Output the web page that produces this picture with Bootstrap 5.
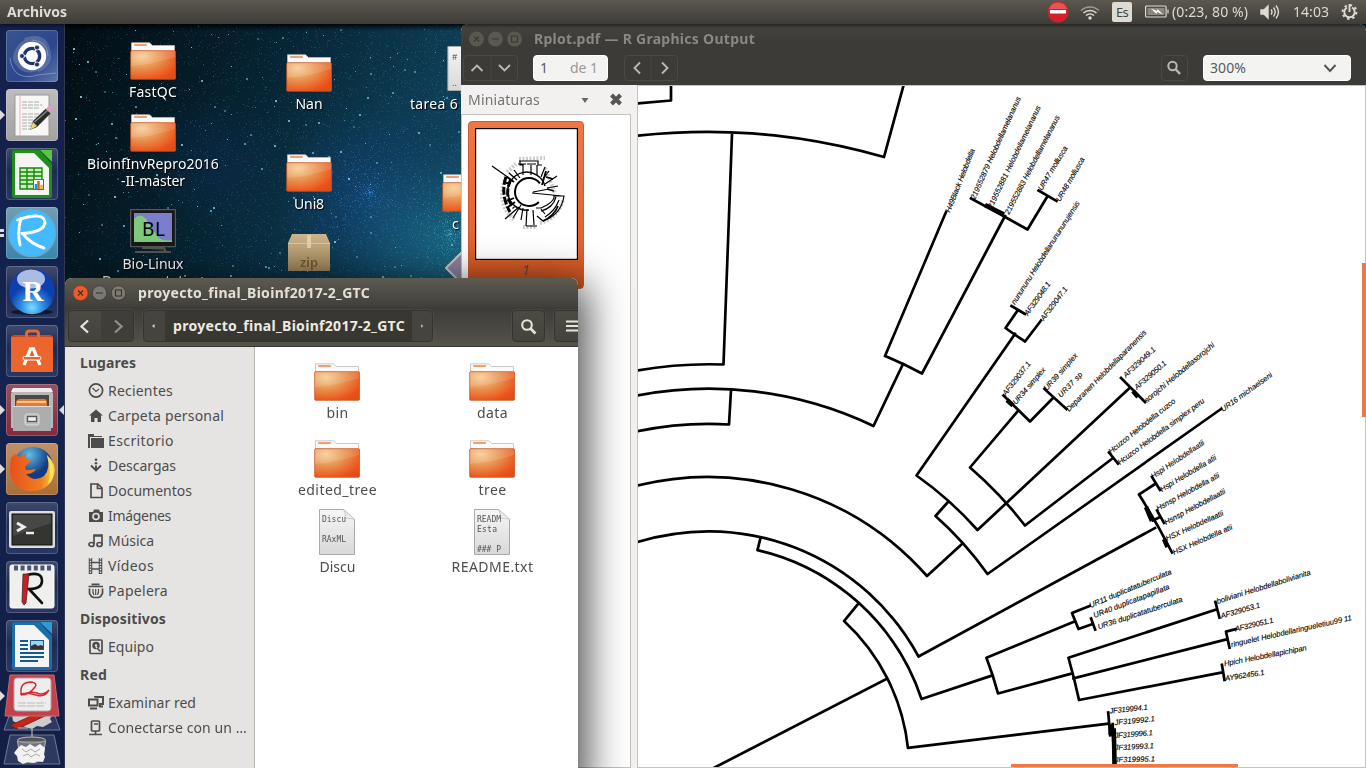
<!DOCTYPE html>
<html lang="es">
<head>
<meta charset="utf-8">
<title>Escritorio</title>
<link rel="stylesheet" href="https://cdn.jsdelivr.net/npm/bootstrap@5.3.0/dist/css/bootstrap.min.css">
<style>
body{width:1366px;height:768px;overflow:hidden;font-family:"Noto Sans",sans-serif;font-size:14px;line-height:18px;color:#4c4c4c;background:#04151d}
svg{display:block;flex:none}
.fit{white-space:nowrap;display:inline-block}
#panel{height:24px;background:linear-gradient(#5b584f,#3d3c37);color:#dfdbd2;z-index:5;padding:0 8px 0 7px;box-shadow:0 1px 4px #000a}
#launcher{width:65px;background:linear-gradient(#14204a,#13244f 50%,#121e45);border-right:1px solid #30384a;padding:6px 0 0 6px;gap:7px;flex:none;overflow:hidden}
.tile{width:52px;height:52px;flex:none;border-radius:4px;background:linear-gradient(#3f4a6c,#1d2a55 45%,#2a3762);box-shadow:inset 0 0 0 1px #ffffff30;position:relative}
.tile>svg{width:52px;height:52px}
.pip,.pipr{position:absolute;top:21px;left:-6px;border:5px solid transparent;border-left:5px solid #ddd;border-right:0}
.pipr{left:auto;right:-6px;border-left:0;border-right:5px solid #ddd}
.pip2{position:absolute;left:-6px;width:4px;height:8px;border-top:3px solid #ddd;border-bottom:3px solid #ddd;top:22px}
#desk{flex:1;overflow:hidden;position:relative}
#desk canvas{position:absolute;left:0;top:0}
.ditem{position:absolute;width:150px;color:#fff;text-shadow:1px 1px 1px #000;text-align:center;line-height:17px}
.dfold{margin:0 auto 2px}
.win{position:absolute;overflow:hidden;border-radius:7px 7px 0 0}
#pdf{left:396px;top:0;width:905px;height:744px;background:#f2f1f0}
#nau{left:0;top:254px;width:513px;height:490px;background:#fff}
#nauShadow{position:absolute;left:0;top:254px;width:513px;height:520px;border-radius:7px;box-shadow:8px 6px 42px 0 #000b}
.pdfhead{background:linear-gradient(#45443f,#3c3b37 18px);height:61px}
.pbtn{border:1px solid #4a4944;border-radius:4px;height:26px;flex:none}
.nbtn{height:32px;border:1px solid #34332f;border-radius:4px;background:linear-gradient(#4c4a43,#44433d);box-shadow:0 0 0 1px #5d5b5255;flex:none}
.entry{background:#f3f3f2;border-radius:4px;height:26px;border:1px solid #fff;color:#5a5a5a}
.side{width:190px;background:#e6e4e2;border-right:1px solid #b8b3ab;padding-left:15px}
.side b{height:31px;display:flex;align-items:center}
.side div{height:25px;display:flex;align-items:center;gap:3px;padding-left:8px}
.files{display:grid;grid-template-columns:155px 155px;grid-auto-rows:77px;padding-left:5px;align-content:start}
.files>div{display:flex;flex-direction:column;align-items:center;justify-content:flex-end;padding-bottom:2px}
.files svg{margin-right:2px}
.thumb{width:116px;height:168px;background:linear-gradient(#f07746,#e0622f 75%,#c9521f);border:1px solid #cf5c2c;border-radius:4px;padding-top:6px}
.ic{fill:none;stroke:#4c4c4c;stroke-width:1.7}
.tlabel{font:italic 7.6px "Liberation Sans",sans-serif;fill:#000;stroke:#000;stroke-width:.12}
.bar-o{position:absolute;background:#f07746}
</style>
</head>
<body class="d-flex flex-column">
<svg width="0" height="0" class="position-absolute">
<defs>
<radialGradient id="fo" cx=".25" cy=".2" r="1"><stop offset="0" stop-color="#f6cd94"/><stop offset=".45" stop-color="#e88d4b"/><stop offset=".85" stop-color="#ec4f18"/><stop offset="1" stop-color="#d8501e"/></radialGradient>
<linearGradient id="pg" x2="0" y2="1"><stop stop-color="#f6f6f6"/><stop offset="1" stop-color="#d8d8d8"/></linearGradient>
<linearGradient id="zp" x2="0" y2="1"><stop stop-color="#cdb68d"/><stop offset="1" stop-color="#a08458"/></linearGradient>
<radialGradient id="blu" cy=".85"><stop stop-color="#7cdcff"/><stop offset=".5" stop-color="#2c8ae0"/><stop offset="1" stop-color="#0d3fae"/></radialGradient>
<radialGradient id="ffx" cx=".4" cy=".2"><stop stop-color="#5fc0ea"/><stop offset="1" stop-color="#143a82"/></radialGradient>
<linearGradient id="ffo" x2="1" y2="0"><stop stop-color="#e8501a"/><stop offset=".7" stop-color="#f08020"/><stop offset="1" stop-color="#fbd93c"/></linearGradient>
<symbol id="folder" viewBox="0 0 46 39"><path d="M1.500 9V.8h18l3 2.700h22V10z" fill="#fafafa" stroke="#bdbdbd" stroke-width=".8"/><rect x="4" y="2" width="13" height="2" rx=".8" fill="#f0a070"/><rect x=".7" y="8.700" width="44.800" height="28.600" rx="1" fill="url(#fo)" stroke="#c9521f" stroke-opacity=".75"/><path d="M1 9h44v6Q25 22 1 24z" fill="#fff" opacity=".13"/></symbol>
<symbol id="sheet" viewBox="0 0 36 46"><path d="M.5.5h24l11 10v35H.5z" fill="url(#pg)" stroke="#aaa"/><path d="M24.500.5q3 5 1.500 8.500 4 .5 9.500 1z" fill="#ececec" stroke="#bbb" stroke-width=".7"/></symbol>
</defs></svg>

<header id="panel" class="d-flex align-items-center position-relative">
 <b class="fit" data-w="60">Archivos</b>
 <svg class="ms-auto" width="22" height="22"><circle cx="11" cy="11" r="10.500" fill="#d3202c"/><path d="M2 8a9.500 9.500 0 0 1 18 0z" fill="#f06a60" opacity=".7"/><rect x="3" y="9" width="16" height="3.500" fill="#fff"/></svg>
 <svg width="20" height="16" style="margin-left:11px" fill="none" stroke="#dfdbd2" stroke-width="1.500"><path d="M1 6.500a13 13 0 0 1 18 0" opacity=".55"/><path d="M3.500 9a9.500 9.500 0 0 1 13 0M6 11.500a6 6 0 0 1 8 0"/><circle cx="10" cy="14" r="1" fill="#dfdbd2"/></svg>
 <span class="d-flex align-items-center justify-content-center" style="margin-left:12px;width:20px;height:20px;background:#dfdbd2;border-radius:2px;color:#45443f;font-size:13px"><span class="fit" data-w="12">Es</span></span>
 <svg width="24" height="14" style="margin-left:13px" fill="none" stroke="#dfdbd2" stroke-width="1.200"><rect x=".6" y="1" width="20.500" height="11" rx="1"/><path d="M23 4.500v4"/><rect x="2.500" y="3" width="17" height="7" fill="#8a877f" stroke="none"/><path d="M6 3.500l6 2.500.5-2 5.500 5.500-6-2.500-.5 2z" fill="#fff" stroke="none"/></svg>
 <span class="fit" data-w="76" style="margin-left:3px">(0:23, 80 %)</span>
 <svg width="21" height="16" style="margin-left:12px" fill="none" stroke="#dfdbd2" stroke-width="1.400"><path d="M1 6h3l4-4v12l-4-4H1z" fill="#dfdbd2"/><path d="M11 5.500q2 2.500 0 5M13.500 3.500q3.500 4.500 0 9M16 1.500q5 6.500 0 13"/></svg>
 <span class="fit" data-w="36" style="margin-left:12px">14:03</span>
 <svg width="17" height="18" style="margin-left:12px" viewBox="0 0 17 18" fill="none" stroke="#dfdbd2"><circle cx="8.500" cy="9" r="6.900" stroke-width="2" stroke-dasharray="2.400 3.020"/><path d="M6 4.500a5.200 5.200 0 1 0 5 0M8.500 1v8" stroke-width="1.900"/></svg>
</header>

<div class="d-flex flex-grow-1" style="height:744px">
<nav id="launcher" class="d-flex flex-column">
 <div class="tile" style="background:linear-gradient(135deg,#3b548f,#2c478c 60%,#6177ad)"><svg viewBox="0 0 52 52"><path d="M7 29C8 12 25 3 38 10c7 5 8 18-2 28C22 48 10 40 7 29M18 8Q42 0 45 24 46 36 32 42" fill="#fff" opacity=".17"/><path d="M4 28Q7 52 32 45L50 43M26 10Q42 11 42 26" fill="none" stroke="#9fb0d8" opacity=".6"/><circle cx="26" cy="26" r="14.200" fill="#fff"/><circle cx="26" cy="26" r="7.700" fill="none" stroke="#22356b" stroke-width="3.300" stroke-dasharray="14.600 1.530" stroke-dashoffset="7.300"/><g fill="#22356b" stroke="#fff" stroke-width=".8"><circle cx="16" cy="26" r="2.500"/><circle cx="31" cy="17.500" r="2.500"/><circle cx="31" cy="34.500" r="2.500"/></g></svg></div>
 <div class="tile" style="background:linear-gradient(#bdbdbd,#a2a2a2)"><i class="pip"></i><svg viewBox="0 0 52 52"><rect x="9" y="6" width="34" height="41" fill="#f7f7f5" stroke="#999"/><path d="M14 6v40" stroke="#f3b3b3"/><path d="M16 13h18M16 16h20M16 19h17M16 25h18M16 28h16M16 31h18M16 34h14M16 37h10M16 40h8" stroke="#aaa" stroke-dasharray="5 1"/><path d="M24 41l3-9 13-12.500 4.500 5L31 38z" fill="#2b2b2b"/><path d="M28.500 33L42 21" stroke="#888" stroke-width="1.500"/><path d="M39.500 20l3.500-3q3-1 4 2l-3 4.500z" fill="#e59ac4"/><path d="M24 41l3-8 4 4z" fill="#e8d870"/></svg></div>
 <div class="tile"><svg viewBox="0 0 52 52"><path d="M8 2h25l13 14v32q0 2-2 2H8q-2 0-2-2V4q0-2 2-2z" fill="#1f8f17"/><path d="M9 5h19l15 15v27H9z" fill="#f4f4f4"/><path d="M34 2h12v12z" fill="#55c93a"/><path d="M14 20h22v21H14z" fill="#c9efb5"/><path d="M14 20h22v21H14zM14 24h22M14 28h22M14 32h22M14 36h22M21 20v21M28 20v21" fill="none" stroke="#16860f" stroke-width="1.400"/><rect x="27.500" y="31.500" width="10" height="10" fill="#fff" stroke="#666"/><path d="M30 41v-5" stroke="#2a8ae0" stroke-width="2.500"/><path d="M32.500 41v-8" stroke="#e05a1a" stroke-width="2.500"/><path d="M35.500 41v-4" stroke="#f0b010" stroke-width="2.500"/></svg></div>
 <div class="tile" style="background:linear-gradient(#719db5,#3c84aa)"><i class="pip2"></i><svg viewBox="0 0 52 52"><circle cx="26" cy="26" r="23.500" fill="#44bbff" stroke="#68a8cb" stroke-width="1.500"/><path d="M15 11.500Q11 25 14 38M11.500 13Q38 4 39 15.500 38 25 16.500 26.500 25 37 38 41" fill="none" stroke="#fff" stroke-width="2.900" stroke-linecap="round"/></svg></div>
 <div class="tile"><svg viewBox="0 0 52 52"><ellipse cx="26" cy="46" rx="21" ry="3" fill="#0008"/><circle cx="26" cy="25.500" r="22.800" fill="url(#blu)"/><ellipse cx="25" cy="13" rx="14" ry="9.500" fill="#fff" opacity=".65"/><text x="27" y="34.500" text-anchor="middle" font-family="Liberation Serif,serif" font-weight="bold" font-size="29" fill="#fff">R</text></svg></div>
 <div class="tile"><svg viewBox="0 0 52 52"><path d="M5 12l3-2h36l3 2v35H5z" fill="#ec652c"/><path d="M5 12l3-2h36l3 2z" fill="#c74b1c"/><path d="M20.500 18V9q0-3 3-3h6q3 0 3 3v9" fill="none" stroke="#dc6a3b" stroke-width="3"/><path d="M18 40l6.500-16h3L34 40" fill="none" stroke="#fff" stroke-width="3.300"/><rect x="17" y="31.500" width="18" height="3.500" rx="1.700" fill="#ec652c" stroke="#fff"/></svg></div>
 <div class="tile" style="background:linear-gradient(#935060,#842a3c)"><i class="pip"></i><i class="pipr"></i><svg viewBox="0 0 52 52"><path d="M7 4h38l2 6v34H5V10z" fill="#b8b8b8"/><path d="M7 4h38l2 4H5z" fill="#ececec"/><rect x="9" y="11" width="34" height="16" fill="#4a4a46"/><path d="M10 17l3-2h26l2 2v10H10z" fill="#e77a32"/><path d="M11 18h29" stroke="#f8dfb5" stroke-width="1.500"/><path d="M7 22h38v25H7z" fill="#adadad"/><path d="M7 22.500h38" stroke="#ddd"/><rect x="19" y="30" width="14" height="11" rx="2" fill="#bbb" stroke="#ddd"/><rect x="21.500" y="32.500" width="9" height="5" fill="#eee" stroke="#555" stroke-width="1.300"/></svg></div>
 <div class="tile" style="background:linear-gradient(#c09069,#a96d3a)"><i class="pip"></i><svg viewBox="0 0 52 52"><circle cx="27" cy="24" r="20" fill="url(#ffx)"/><path d="M5 15l4-4 4 3 8-4-2 5 6 2-6 7 1 3q5 0 10-1-3 5-10 5 8 9 18 2Q45 26 41 12q10 9 7 20Q43 48 26 48 7 48 4 29q0-8 1-14z" fill="url(#ffo)"/><path d="M41 12q8 8 6 22-2 6-5 7 4-11-1-29z" fill="#fce257"/></svg></div>
 <div class="tile"><svg viewBox="0 0 52 52"><rect x="3" y="9" width="46" height="37" rx="2" fill="#ddd"/><rect x="6" y="12" width="40" height="31" fill="#343431" stroke="#111"/><path d="M7 13h38v8L7 34z" fill="#555" opacity=".6"/><path d="M11 21l7 4-7 4" fill="none" stroke="#eee" stroke-width="3"/><path d="M20 31h8" stroke="#eee" stroke-width="2.500"/></svg></div>
 <div class="tile"><svg viewBox="0 0 52 52"><rect x="4" y="4" width="44" height="43" rx="2" fill="#efefed" stroke="#fff"/><path d="M8 7h37" stroke="#4d5570" stroke-width="5" stroke-dasharray="4 2.600"/><path d="M21 14q15-4 15 6 0 8-13 8l13 14" fill="none" stroke="#111" stroke-width="2.600" stroke-linecap="round"/><path d="M17 13h6l-3 29-2 2-2-3z" fill="#cf1d22" stroke="#222" stroke-width=".7"/></svg></div>
 <div class="tile"><svg viewBox="0 0 52 52"><path d="M8 2h25l13 14v32q0 2-2 2H8q-2 0-2-2V4q0-2 2-2z" fill="#1b6fa8"/><path d="M9 5h19l15 15v27H9z" fill="#f4f4f4"/><path d="M34 2h12v12z" fill="#2c9cd8"/><path d="M14 21h8M14 25h8M14 29h8M14 33h24M14 37h24M14 41h18" stroke="#155a8d" stroke-width="2"/><rect x="24.500" y="20.500" width="13" height="9" fill="#9dd3ee" stroke="#155a8d"/><path d="M25 29v-3l4-2 3 2 3-1 2 1v3z" fill="#333"/></svg></div>
 <div class="position-relative" style="height:94px;margin:-5px 0 0 -6px;flex:none"><i class="pip" style="left:0;top:17px"></i><svg width="64" height="94" viewBox="0 0 64 94"><path d="M10 61h44l6 29H4zM9 42h46l5 14H4z" fill="#2d3960" stroke="#707a94"/><path d="M12 41h40l-2 4 2 3-9 5-6-1-5 3-7-2-12-6z" fill="#ccc"/><path d="M11 51l27-12 9 2-30 14z" fill="#c4261a" stroke="#822"/><path d="M18 54h10M32 55v12" stroke="#ccc"/><ellipse cx="31.500" cy="66" rx="14" ry="3" fill="#555" stroke="#bbb"/><path d="M17.500 67l3 20q11 3 22 0l3-20" fill="#999" fill-opacity=".6" stroke="#bbb"/><path d="M17 75l4-4 5 2 4-3 5 3 5-3 5 4-1 6 1 3-2 5-5-1-4 2-6-1-5 2-5-3-1-5-3-3z" fill="#f2f2f2"/><path d="M22 75l4 3 5-3 4 3 5-3M23 82l5-2 3 3 5-3 4 2" fill="none" stroke="#aaa"/><path d="M10 1h44l5 41H5z" fill="#c2414c" stroke="#cb6870"/><rect x="14" y="4" width="37" height="33" rx="3" fill="#ededed" stroke="#aaa"/><path d="M21 19q-1-11 10-11 7 1 4 5-6 8-14 8 9-4 16-2 6 3 12-3-4 8-13 5-9-3-15-1z" fill="none" stroke="#d82830" stroke-width="1.500"/><path d="M18 29h28M18 32h26" stroke="#bbb" stroke-dasharray="8 1"/></svg></div>
</nav>

<main id="desk">
 <canvas id="sky" width="400" height="260"></canvas>
 <div class="ditem" style="left:13px;top:18px"><svg class="dfold" width="46" height="39"><use href="#folder"/></svg><span class="fit" data-w="48">FastQC</span></div>
 <div class="ditem" style="left:13px;top:90px"><svg class="dfold" width="46" height="39"><use href="#folder"/></svg><span class="fit" data-w="132">BioinfInvRepro2016</span><br><span class="fit" data-w="64">-II-master</span></div>
 <div class="ditem" style="left:13px;top:185px"><svg class="mx-auto" width="46" height="46"><rect x=".7" y=".7" width="44.600" height="37" fill="#181818" stroke="#666"/><rect x="4" y="4" width="38" height="29" fill="#7b7fcb"/><path d="M4 10q6-7 12 0 6 10 12 18 5 5 14 3v2H4z" fill="#7ec97b"/><text x="12" y="26.500" font-family="Noto Sans,sans-serif" font-size="19" textLength="23" style="text-shadow:none">BL</text><path d="M12 39h22l2 4H5h36" fill="#333" stroke="#555" stroke-width="2"/></svg><span class="fit" data-w="61">Bio-Linux</span><br><span class="fit" data-w="102">Documentation</span></div>
 <div class="ditem" style="left:169px;top:30px"><svg class="dfold" width="46" height="39"><use href="#folder"/></svg><span class="fit" data-w="27">Nan</span></div>
 <div class="ditem" style="left:169px;top:130px"><svg class="dfold" width="46" height="39"><use href="#folder"/></svg><span class="fit" data-w="30">Uni8</span></div>
 <div class="ditem" style="left:169px;top:210px"><svg class="mx-auto" width="42" height="38"><path d="M4 0h34l4 9v28H0V9z" fill="url(#zp)"/><path d="M0 9.500h42" stroke="#d8c8a8"/><rect x="19" y="1" width="4" height="13" fill="#e0cfad"/><text x="21" y="33" text-anchor="middle" font-family="Noto Sans,sans-serif" font-weight="600" font-size="13" fill="#735b35" style="text-shadow:none">zip</text></svg></div>
 <div class="ditem text-start" style="left:345px;top:22px"><svg style="margin-left:37px" width="36" height="45"><use href="#sheet"/><text x="5" y="14" font-family="Liberation Mono,monospace" font-size="9" fill="#444" style="text-shadow:none">#</text><text x="5" y="40" font-size="9" fill="#444" style="text-shadow:none">..</text></svg><span class="fit" data-w="48" style="margin-top:4px">tarea 6</span></div>
 <div class="ditem text-start" style="left:377px;top:150px"><svg width="46" height="39"><use href="#folder"/></svg><span style="margin-left:10px;position:relative;top:2px">c</span></div>
 <div class="ditem" style="left:380px;top:224px"><svg width="40" height="40"><path d="M1 20L20 1l19 19-19 19z" fill="#8d83a0" stroke="#ccc" stroke-width="2"/></svg></div>

 <section id="pdf" class="win d-flex flex-column">
  <div class="pdfhead">
   <div class="d-flex align-items-center" style="height:30px;padding-left:8px;color:#8a8880">
    <svg width="55" height="16"><g fill="#5a5850"><circle cx="7.500" cy="8" r="7.500"/><circle cx="26.500" cy="8" r="7.500"/><circle cx="45.500" cy="8" r="7.500"/></g><path d="M5 5.500l5 5m0-5l-5 5M23 8h7M42.500 5h6v6h-6z" fill="none" stroke="#393833" stroke-width="1.100"/></svg>
    <b class="fit" data-w="221" style="margin-left:10px">Rplot.pdf — R Graphics Output</b>
   </div>
   <div class="d-flex align-items-center" style="height:28px;padding-left:2px">
    <div class="pbtn d-flex" style="width:55px"><svg width="54" height="24" fill="none" stroke="#bbb8ae" stroke-width="1.900"><path d="M7.500 15l5.500-5.500L18.500 15M35 9l5.500 5.500L46 9"/><path d="M27 0v24" stroke="#4a4944" stroke-width="1"/></svg></div>
    <div class="entry d-flex align-items-center justify-content-between" style="width:75px;margin-left:15px;padding:0 9px 0 6px"><span>1</span><span class="fit" data-w="28" style="color:#999">de 1</span></div>
    <div class="pbtn d-flex" style="width:54px;margin-left:16px"><svg width="52" height="24" fill="none" stroke="#bbb8ae" stroke-width="1.900"><path d="M15 6.500L9.500 12l5.500 5.500M37 6.500l5.500 5.500-5.500 5.500"/><path d="M26 0v24" stroke="#4a4944" stroke-width="1"/></svg></div>
    <div class="pbtn" style="width:27px;margin-left:483px"><svg width="25" height="24" fill="none" stroke="#bbb8ae"><circle cx="10.500" cy="10" r="4.200" stroke-width="2"/><path d="M13.500 13l4.500 5" stroke-width="2.500"/></svg></div>
    <div class="entry d-flex align-items-center justify-content-between" style="width:148px;margin-left:15px;padding:0 13px 0 6px"><span class="fit" data-w="36">300%</span><svg width="14" height="9" fill="none" stroke="#555" stroke-width="2"><path d="M1.500 1L7 7l5.500-6"/></svg></div>
   </div>
  </div>
  <div class="d-flex flex-grow-1">
   <aside style="width:176px" class="flex-shrink-0">
    <div class="d-flex align-items-center" style="height:29px;padding-left:7px;color:#747474"><span class="fit" data-w="72">Miniaturas</span><svg width="8" height="6" style="margin-left:41px"><path d="M.5 1h7L4 6z" fill="#666"/></svg><svg width="14" height="13" style="margin-left:20px" fill="none" stroke="#555" stroke-width="4"><path d="M2.500 2l9 9m0-9l-9 9"/></svg></div>
    <div style="width:170px;height:654px;background:#fff;border:1px solid #c6c2bd;padding:6px 0 0 6px">
     <div class="thumb text-center">
      <svg class="mx-auto" width="103" height="132" viewBox="0 0 103 132"><rect x=".5" y=".5" width="102" height="131" fill="#fff" stroke="#000" stroke-width="1.400"/>
       <g fill="none" stroke="#aaa" stroke-width="4" stroke-dasharray="2 1.500" opacity=".6"><path d="M31 48Q20 77 40 92M44 31l26-1M70 40l10 25M48 99h14M65 95q18-5 23-23M32 44l9-8"/></g>
       <g fill="none" stroke="#000"><path d="M54 82A19 19 0 1 1 70 58" stroke-width="1.500"/><circle cx="54" cy="64" r="14" stroke-width="2" stroke-dasharray="67 21" stroke-dashoffset="-11"/><path d="M31 49Q25 66 35 84M36 51Q28 68 39 80" stroke-width="3" stroke-dasharray="8 2"/><path d="M17 38l17 12M34 45l8 7M39 42l6 8M48 47V37H45V33H63v4h4M62 37V47M56 37v10M66 49l4-10M68 51l6-8M70 56l12-8M72 60l11-2M58 64l16-3M57 65l30 3M43 36h8M44 33h11M52 36h9M30 91l14-12M38 90l8-13M46 92l2-12M51 98l1-17M59 97l-1-15M51 98h11M61 80h5l6-3q8-5 7-9h10q-3 19-21 25l-6-5M66 83q12-3 15-14M70 89q10-6 14-17M66 81l4 5" stroke-width="1.200"/><path d="M68 93q11-5 15-15M32 49l7 5M31 55h5M32 73l7-3M33 79l7-5M67 57l4-14M71 49l7 2M72 61l7 2" stroke-width="1.800"/></g></svg>
      <i style="font-size:14px;color:#5a4a40;position:relative;top:1px">1</i>
     </div>
    </div>
   </aside>
   <div class="position-relative" style="width:729px;border:1px solid #c6c2bd;background:#fff">
    <svg id="tree" width="727" height="681" viewBox="638 86 727 681" fill="none" stroke="#000" stroke-width="2.700" stroke-linejoin="round" stroke-linecap="square">
     <path d="M630 104L671 100.500V80M630 136.500A638 638 0 0 1 884 157L905 80M732 134L723.500 364.500A405 405 0 0 0 630 372"/>
     <path d="M630 397A381.500 381.500 0 0 1 873.500 426L903 364M731 390L729 424.500A346 346 0 0 0 630 433"/>
     <path d="M630 487.500A293 293 0 0 1 927 576L962 544M630 544.500A239 239 0 0 1 918.500 656.500L1155 528"/>
     <path d="M946 212L885 356Q904 364 922 373.500L1005 216M971 198.500Q1000 214 1027.500 229.500L1047 197M1038.500 190.500L1056.500 201"/>
     <path d="M1011.500 306L1025 314M1018 310L1005.500 328Q1015 335 1025 341.500L1041 320.500M1015 334L916.500 475.500A361 361 0 0 1 977.500 530L1128.500 389M1121 378L1145 402"/>
     <path d="M948 502L935.500 516A341 341 0 0 1 987.500 574L1221 409M1018 411L970 467.500A401 401 0 0 1 1025 525.500L1113 458M1109 452.500L1118 463.500"/>
     <path d="M1003.500 395.500L1030 421.500 1053 398M1044.500 389L1066.500 409"/>
     <path d="M1155 484L1139 494.500Q1157 523 1172 552.500M1152 477L1160 490M1153 520.500L1159 517.500M1157 510.500L1164 523"/>
     <path d="M985 205L1004 214.500M1007 400L1013 405.500M1133 391L1138 397M1146 507L1152 521M1164 539L1167.500 547" stroke-width="4.500" stroke-linecap="butt"/>
     <g id="lower" transform="translate(840 540) scale(1.0064) translate(-840 -540)">
      <path d="M761 538L758 550A225 225 0 0 1 921 698L990 675M858 603.500L844 620.500A201 201 0 0 1 907.500 746.500L1107 722.500M885.500 678.500L700 774"/>
      <path d="M1073 621L985.500 657Q992 674 997 692.500L1069 673M1088 605.500L1070.500 612.500 1077 628.500 1091 623.500M1089.500 618L1093.500 629"/>
      <path d="M1214 609L1067 657Q1073 678 1077.500 699L1220 671.500M1213 601.500L1217 617M1072 677.500L1225 638.500M1233 628.500L1223.500 631 1227 647M1219.500 664L1222 679"/>
      <path d="M1106.500 711.500L1108.500 734M1111 723L1112.500 770"/>
      <path d="M1109 723V734M1112 727L1113 770" stroke-width="4.500" stroke-linecap="butt"/>
     </g>
    </svg>
    <div class="bar-o" style="right:-1px;top:177px;width:4px;height:154px"></div>
    <div class="bar-o" style="left:373px;bottom:0;width:227px;height:3px"></div>
   </div>
  </div>
 </section>

 <div id="nauShadow"></div>
 <section id="nau" class="win d-flex flex-column">
  <div class="d-flex align-items-center" style="height:29px;flex:none;padding-left:8px;background:linear-gradient(#5d5a50,#403f3a);color:#e4e0d6">
   <svg width="55" height="16"><circle cx="7.500" cy="8" r="7.500" fill="#ec5a2b" stroke="#8a3517" stroke-width=".6"/><g fill="#7c7971" stroke="#33322e" stroke-width=".6"><circle cx="26.500" cy="8" r="7.200"/><circle cx="45.500" cy="8" r="7.200"/></g><path d="M5 5.500l5 5m0-5l-5 5M23 8h7M42.500 5h6v6h-6z" fill="none" stroke="#3a3025" stroke-width="1.100"/></svg>
   <b class="fit" data-w="232" style="margin-left:10px">proyecto_final_Bioinf2017-2_GTC</b>
  </div>
  <div class="d-flex align-items-center" style="height:40px;flex:none;padding:0 0 1px 3px;background:linear-gradient(#3c3b37,#55534a);border-bottom:1px solid #37352f;color:#eeeae0">
   <div class="nbtn d-flex overflow-hidden" style="width:66px"><svg width="65" height="30" fill="none" stroke="#e8e4da" stroke-width="2.300"><path d="M32 0h33v30H32z" fill="#3f3e39" stroke="none"/><path d="M19 9.500L12.500 15.500 19 21.500"/><path d="M46 9.500l6.500 6-6.500 6" stroke="#918f87"/></svg></div>
   <div class="nbtn d-flex align-items-center overflow-hidden" style="width:290px;margin-left:9px;background:#45443e"><svg width="21" height="30"><path d="M10.500 13v4l-2.500-2z" fill="#ddd"/></svg><div class="d-flex align-items-center flex-shrink-0" style="width:247px;height:32px;background:#383732;padding-left:8px"><b class="fit" data-w="232">proyecto_final_Bioinf2017-2_GTC</b></div><svg width="20" height="30"><path d="M9 13v4l2.500-2z" fill="#aaa"/></svg></div>
   <div class="nbtn" style="width:33px;margin-left:79px"><svg width="31" height="30" fill="none" stroke="#e8e4da"><circle cx="14" cy="14" r="4.800" stroke-width="2.100"/><path d="M17.500 17.500l5 5" stroke-width="2.600"/></svg></div>
   <div class="nbtn" style="width:36px;margin-left:9px"><svg width="31" height="30" stroke="#e8e4da" stroke-width="2.200"><path d="M11 10.500h15M11 15h15M11 19.500h15"/></svg></div>
  </div>
  <div class="d-flex flex-grow-1">
   <aside class="side flex-shrink-0">
    <b><span class="fit" data-w="56">Lugares</span></b>
    <div><svg class="ic" width="17" height="16"><circle cx="8" cy="7.500" r="6.600"/><path d="M4.500 5l3.500 3.500L11 6" stroke-width="1.100"/></svg><span class="fit" data-w="65">Recientes</span></div>
    <div><svg width="17" height="16" fill="#4c4c4c"><path d="M8 1.500l7 6h-2V14h-3.500v-4h-3v4H3V7.500H1z"/></svg><span class="fit" data-w="116">Carpeta personal</span></div>
    <div><svg width="17" height="16" fill="#4c4c4c"><path d="M0 1h6v2h8v1H2v10H0zM3 5h13v10H3z"/><path d="M0 4h2v11H0z"/></svg><span class="fit" data-w="66">Escritorio</span></div>
    <div><svg width="17" height="16" fill="#4c4c4c"><circle cx="8" cy="1.800" r="1.300"/><circle cx="8" cy="5.300" r="1.300"/><path d="M3 7.500l5 5 5-5M8 7.500v5" fill="none" stroke="#4c4c4c" stroke-width="1.900"/></svg><span class="fit" data-w="68">Descargas</span></div>
    <div><svg class="ic" width="17" height="16"><path d="M3 1h7l4 4v9.500H3zM9.500 1v4.500H14"/></svg><span class="fit" data-w="84">Documentos</span></div>
    <div><svg width="17" height="16"><path d="M1 4h4l1-2.500h5L12 4h3v10H1z" fill="#4c4c4c"/><circle cx="8" cy="8.500" r="3" fill="none" stroke="#e6e4e2" stroke-width="1.600"/></svg><span class="fit" data-w="63">Imágenes</span></div>
    <div><svg class="ic" width="17" height="16"><ellipse cx="3.500" cy="11.500" rx="2.500" ry="2"/><ellipse cx="11.500" cy="11.500" rx="2.500" ry="2"/><path d="M6 11V2h8v9.500M6 3h8"/></svg><span class="fit" data-w="46">Música</span></div>
    <div><svg class="ic" width="17" height="16"><path d="M2.500 0v16M12.500 0v16" stroke-width="3.500"/><path d="M4 4.500h8M4 11h8" stroke-width="1.300"/><path d="M2.500 0v16M12.500 0v16" stroke="#e6e4e2" stroke-width="1.400" stroke-dasharray="1.500 1.200"/></svg><span class="fit" data-w="46">Vídeos</span></div>
    <div><svg class="ic" width="17" height="16"><path d="M.5 3.500h14.500M3.500 1.300h8M1.500 5.500v5l2 3 2 1h5l2-1 2-3v-5"/><path d="M5 6q-.5 4 1 6M7.700 6v6M10.500 6q.5 4-1 6" stroke-width="1.200"/></svg><span class="fit" data-w="60">Papelera</span></div>
    <b><span class="fit" data-w="86">Dispositivos</span></b>
    <div><svg class="ic" width="17" height="16"><rect x="2" y="1" width="12" height="13.500" rx="1"/><circle cx="8" cy="6.500" r="2.500" stroke-width="2.500"/><path d="M8 8l4 4" stroke="#e6e4e2"/><path d="M9 9l3.500 3.500"/></svg><span class="fit" data-w="46">Equipo</span></div>
    <b><span class="fit" data-w="27">Red</span></b>
    <div><svg class="ic" width="17" height="16" style="stroke-width:2"><rect x="1" y="4.500" width="8.500" height="6"/><path d="M7 2.500V2h8v7h-4M2 13.500h7M12 9v2.500h3"/></svg><span class="fit" data-w="88">Examinar red</span></div>
    <div><svg class="ic" width="17" height="16"><rect x="3.500" y="1" width="8" height="10" rx="1"/><path d="M6 4h4M7.500 11v3M1 14.500h13"/></svg><span class="fit" data-w="139">Conectarse con un …</span></div>
   </aside>
   <div class="files">
    <div><svg width="46" height="39"><use href="#folder"/></svg><span class="fit" data-w="22" style="margin-top:2px">bin</span></div>
    <div><svg width="46" height="39"><use href="#folder"/></svg><span class="fit" data-w="31" style="margin-top:2px">data</span></div>
    <div><svg width="46" height="39"><use href="#folder"/></svg><span class="fit" data-w="79" style="margin-top:2px">edited_tree</span></div>
    <div><svg width="46" height="39"><use href="#folder"/></svg><span class="fit" data-w="28" style="margin-top:2px">tree</span></div>
    <div><svg width="36" height="46"><use href="#sheet"/><g font-family="DejaVu Sans Mono,monospace" font-size="8" fill="#555"><text x="3" y="13" textLength="24">Discu</text><text x="3" y="33" textLength="24">RAxML</text></g></svg><span class="fit" data-w="36" style="margin-top:3px">Discu</span></div>
    <div><svg width="36" height="46"><use href="#sheet"/><g font-family="DejaVu Sans Mono,monospace" font-size="8" fill="#555"><text x="3" y="13" textLength="24">READM</text><text x="3" y="23" textLength="20">Esta</text><text x="3" y="43" textLength="24">### P</text></g></svg><span class="fit" data-w="82" style="margin-top:3px">README.txt</span></div>
   </div>
  </div>
 </section>
</main>
</div>
<script src="https://cdn.jsdelivr.net/npm/bootstrap@5.3.0/dist/js/bootstrap.bundle.min.js"></script>
<script>
// spread each label over its intended width
document.querySelectorAll('.fit').forEach(function(e){
  var n=e.textContent.length, w=e.getBoundingClientRect().width, s=(+e.dataset.w-w)/n;
  e.style.letterSpacing=s.toFixed(3)+'px';
});
// tip labels of the tree: x, y of the baseline start, x, y of its end, text
var upper=[[950,213,975,150,'H49Black Helobdella'],[975,200,1021,98,'219552879 Helobdellamelananus'],[992,209,1041,107,'219552881 Helobdellamelananus'],[1009,215,1060,117,'219552883 Helobdellamelananus'],[1042,191,1068,148,'UR47 mollusca'],[1060,202,1085,159,'UR48 mollusca'],[1015,305,1080,203,'nunununu Helobdellanunununujensis'],[1028,316,1051,284,'AF329048.1'],[1044,321,1068,289,'AF329047.1'],[1006,396,1031,364,'AF329037.1'],[1016,405,1046,370,'UR34 simplex'],[1047,391,1078,356,'UR39 simplex'],[1061,398,1083,375,'UR37 sp'],[1069,412,1147,333,'Deparanen Helobdellaparanensis'],[1126,378,1156,350,'AF329049.1'],[1137,390,1167,364,'AF329050.1'],[1147,403,1215,346,'sorojchi Helobdellasorojchi'],[1111,454,1176,402,'Hcuzco Helobdella cuzco'],[1120,465,1205,402,'Hcuzco Helobdella simplex peru'],[1223,412,1273,376,'UR16 michaelseni'],[1153,479,1205,444,'Hspi Helobdellaatii'],[1162,492,1217,459,'Hspi Helobdella atii'],[1158,511,1220,477,'Hsnsp Helobdella atii'],[1166,525,1226,493,'Hsnsp Helobdellaatii'],[1167,541,1224,515,'HSX Helobdellaatii'],[1174,555,1233,529,'HSX Helobdella atii']];
var lower=[[1089,607.5,1170,573.5,'UR11 duplicatatuberculata'],[1093,617.5,1168,588.5,'UR40 duplicatapapillata'],[1097,629,1181,601,'UR36 duplicatatuberculata'],[1215,603.5,1308,574.5,'boliviani Helobdellabolivianita'],[1219,618,1258,607,'AF329053.1'],[1233,631,1271,622,'AF329051.1'],[1229,646.5,1349,619.5,'ringuelet Helobdellaringueletiuu99 11'],[1222,665.5,1304,649.5,'Hpich Helobdellapichipan'],[1223,680,1262,674,'AY962456.1'],[1108,712.5,1146,708.5,'JF319994.1'],[1113,724,1153,720,'JF319992.1'],[1113,737,1151,734,'JF319996.1'],[1113,749,1152,747,'JF319993.1'],[1113,761,1153,760,'JF319995.1']];
function tips(list,host){
  list.forEach(function(t){
    var dx=t[2]-t[0],dy=t[3]-t[1],e=document.createElementNS('http://www.w3.org/2000/svg','text');
    e.setAttribute('class','tlabel');
    e.setAttribute('textLength',Math.hypot(dx,dy).toFixed(1));
    e.setAttribute('transform','translate('+t[0]+' '+t[1]+') rotate('+(Math.atan2(dy,dx)*180/Math.PI).toFixed(2)+')');
    e.textContent=t[4];host.appendChild(e);
  });
}
tips(upper,document.getElementById('tree'));
tips(lower,document.getElementById('lower'));
// starry wallpaper
var c=document.getElementById('sky').getContext('2d'),seed=7;
function rnd(){seed=(seed*16807)%2147483647;return seed/2147483647;}
var g=c.createLinearGradient(0,40,400,220);g.addColorStop(0,'#030e14');g.addColorStop(.4,'#062230');g.addColorStop(1,'#124a66');
c.fillStyle=g;c.fillRect(0,0,400,260);
[[300,170,90,'20,70,130'],[385,220,110,'30,120,150'],[150,140,70,'14,44,80'],[360,120,80,'14,60,90']].forEach(function(b){
  var r=c.createRadialGradient(b[0],b[1],0,b[0],b[1],b[2]);
  r.addColorStop(0,'rgba('+b[3]+',.55)');r.addColorStop(1,'rgba('+b[3]+',0)');c.fillStyle=r;c.fillRect(0,0,400,260);
});
for(var i=0;i<14000;i++){var x=rnd()*400,y=rnd()*260;if(rnd()<.25+x/600){c.fillStyle='rgba(70,145,190,'+(rnd()*.32)+')';c.fillRect(x|0,y|0,1,1);}}
for(i=0;i<1500;i++){var a=rnd()*6.3,d=Math.sqrt(rnd())*rnd()*75,k=i%2;c.fillStyle='rgba('+(k?'60,140,225,':'70,190,215,')+(rnd()*.45)+')';c.fillRect((k?305:385)+Math.cos(a)*d|0,(k?168:210)+Math.sin(a)*d|0,1,1);}
for(i=0;i<230;i++){c.fillStyle='rgba(120,205,235,'+(.35+rnd()*.6)+')';var s=rnd()<.35?2:1;c.fillRect(rnd()*400|0,rnd()*260|0,s,s);}
g=c.createLinearGradient(0,0,0,7);g.addColorStop(0,'rgba(0,0,0,.7)');g.addColorStop(1,'rgba(0,0,0,0)');c.fillStyle=g;c.fillRect(0,0,400,7);
</script>
</body>
</html>
